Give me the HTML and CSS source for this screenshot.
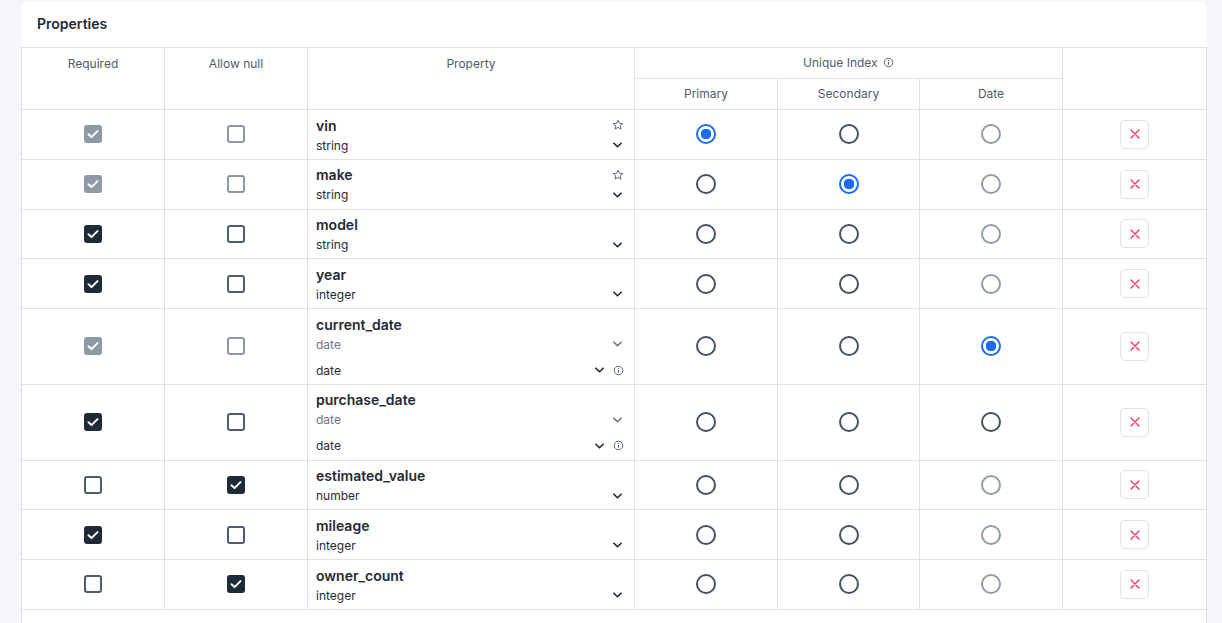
FILE: index.html
```html
<!DOCTYPE html>
<html>
<head>
<meta charset="utf-8">
<link rel="stylesheet" href="styles.css">
</head>
<body>
<svg width="0" height="0" class="defs">
  <defs>
    <symbol id="chev" viewBox="0 0 10 6"><path d="M1 1l4 4 4-4" fill="none" stroke="currentColor" stroke-width="1.8" stroke-linecap="round" stroke-linejoin="round"/></symbol>
    <symbol id="star" viewBox="0 0 12 12"><path d="M6 1.2l1.4 3.1 3.3.3-2.5 2.2.8 3.3L6 8.4 3 10.1l.8-3.3L1.3 4.6l3.3-.3z" fill="none" stroke="currentColor" stroke-width="0.9" stroke-linejoin="round"/></symbol>
    <symbol id="info" viewBox="0 0 12 12"><circle cx="6" cy="6" r="4.6" fill="none" stroke="currentColor" stroke-width="1"/><path d="M6 5.4v3" stroke="currentColor" stroke-width="1.1"/><circle cx="6" cy="3.8" r="0.6" fill="currentColor"/></symbol>
    <symbol id="check" viewBox="0 0 18 18"><path d="M4.5 9.3l3 2.8 6-6" fill="none" stroke="#fff" stroke-width="2" stroke-linecap="round" stroke-linejoin="round"/></symbol>
    <symbol id="cross" viewBox="0 0 10 10"><path d="M1 1l8 8M9 1l-8 8" stroke="currentColor" stroke-width="1.4" stroke-linecap="round"/></symbol>
  </defs>
</svg>
<div class="card">
  <h2 class="card-title">Properties</h2>
  <table class="props">
    <colgroup>
      <col class="c-req"><col class="c-null"><col class="c-prop"><col class="c-idx"><col class="c-idx2"><col class="c-idx"><col class="c-del">
    </colgroup>
    <thead>
      <tr class="h1">
        <th rowspan="2" class="tall">Required</th>
        <th rowspan="2" class="tall">Allow null</th>
        <th rowspan="2" class="tall">Property</th>
        <th colspan="3">Unique Index <svg class="i-info hdr-info"><use href="#info"/></svg></th>
        <th rowspan="2" class="tall"></th>
      </tr>
      <tr class="h2">
        <th>Primary</th>
        <th>Secondary</th>
        <th>Date</th>
      </tr>
    </thead>
    <tbody>
      <tr>
        <td class="ctr"><span class="cb checked disabled"><svg><use href="#check"/></svg></span></td>
        <td class="ctr"><span class="cb disabled"></span></td>
        <td class="prop">
          <div class="line"><span class="name">vin</span><svg class="i-star"><use href="#star"/></svg></div>
          <div class="line"><span class="type">string</span><svg class="i-chev"><use href="#chev"/></svg></div>
        </td>
        <td class="ctr"><span class="radio on"></span></td>
        <td class="ctr"><span class="radio"></span></td>
        <td class="ctr"><span class="radio disabled"></span></td>
        <td class="ctr"><button class="del"><svg><use href="#cross"/></svg></button></td>
      </tr>
      <tr>
        <td class="ctr"><span class="cb checked disabled"><svg><use href="#check"/></svg></span></td>
        <td class="ctr"><span class="cb disabled"></span></td>
        <td class="prop">
          <div class="line"><span class="name">make</span><svg class="i-star"><use href="#star"/></svg></div>
          <div class="line"><span class="type">string</span><svg class="i-chev"><use href="#chev"/></svg></div>
        </td>
        <td class="ctr"><span class="radio"></span></td>
        <td class="ctr"><span class="radio on"></span></td>
        <td class="ctr"><span class="radio disabled"></span></td>
        <td class="ctr"><button class="del"><svg><use href="#cross"/></svg></button></td>
      </tr>
      <tr>
        <td class="ctr"><span class="cb checked"><svg><use href="#check"/></svg></span></td>
        <td class="ctr"><span class="cb"></span></td>
        <td class="prop">
          <div class="line"><span class="name">model</span></div>
          <div class="line"><span class="type">string</span><svg class="i-chev"><use href="#chev"/></svg></div>
        </td>
        <td class="ctr"><span class="radio"></span></td>
        <td class="ctr"><span class="radio"></span></td>
        <td class="ctr"><span class="radio disabled"></span></td>
        <td class="ctr"><button class="del"><svg><use href="#cross"/></svg></button></td>
      </tr>
      <tr>
        <td class="ctr"><span class="cb checked"><svg><use href="#check"/></svg></span></td>
        <td class="ctr"><span class="cb"></span></td>
        <td class="prop">
          <div class="line"><span class="name">year</span></div>
          <div class="line"><span class="type">integer</span><svg class="i-chev"><use href="#chev"/></svg></div>
        </td>
        <td class="ctr"><span class="radio"></span></td>
        <td class="ctr"><span class="radio"></span></td>
        <td class="ctr"><span class="radio disabled"></span></td>
        <td class="ctr"><button class="del"><svg><use href="#cross"/></svg></button></td>
      </tr>
      <tr>
        <td class="ctr"><span class="cb checked disabled"><svg><use href="#check"/></svg></span></td>
        <td class="ctr"><span class="cb disabled"></span></td>
        <td class="prop">
          <div class="line"><span class="name">current_date</span></div>
          <div class="line muted"><span class="type">date</span><svg class="i-chev"><use href="#chev"/></svg></div>
          <div class="line sub"><span class="type">date</span><span class="icons"><svg class="i-chev"><use href="#chev"/></svg><svg class="i-info"><use href="#info"/></svg></span></div>
        </td>
        <td class="ctr"><span class="radio"></span></td>
        <td class="ctr"><span class="radio"></span></td>
        <td class="ctr"><span class="radio on"></span></td>
        <td class="ctr"><button class="del"><svg><use href="#cross"/></svg></button></td>
      </tr>
      <tr>
        <td class="ctr"><span class="cb checked"><svg><use href="#check"/></svg></span></td>
        <td class="ctr"><span class="cb"></span></td>
        <td class="prop">
          <div class="line"><span class="name">purchase_date</span></div>
          <div class="line muted"><span class="type">date</span><svg class="i-chev"><use href="#chev"/></svg></div>
          <div class="line sub"><span class="type">date</span><span class="icons"><svg class="i-chev"><use href="#chev"/></svg><svg class="i-info"><use href="#info"/></svg></span></div>
        </td>
        <td class="ctr"><span class="radio"></span></td>
        <td class="ctr"><span class="radio"></span></td>
        <td class="ctr"><span class="radio"></span></td>
        <td class="ctr"><button class="del"><svg><use href="#cross"/></svg></button></td>
      </tr>
      <tr>
        <td class="ctr"><span class="cb"></span></td>
        <td class="ctr"><span class="cb checked"><svg><use href="#check"/></svg></span></td>
        <td class="prop">
          <div class="line"><span class="name">estimated_value</span></div>
          <div class="line"><span class="type">number</span><svg class="i-chev"><use href="#chev"/></svg></div>
        </td>
        <td class="ctr"><span class="radio"></span></td>
        <td class="ctr"><span class="radio"></span></td>
        <td class="ctr"><span class="radio disabled"></span></td>
        <td class="ctr"><button class="del"><svg><use href="#cross"/></svg></button></td>
      </tr>
      <tr>
        <td class="ctr"><span class="cb checked"><svg><use href="#check"/></svg></span></td>
        <td class="ctr"><span class="cb"></span></td>
        <td class="prop">
          <div class="line"><span class="name">mileage</span></div>
          <div class="line"><span class="type">integer</span><svg class="i-chev"><use href="#chev"/></svg></div>
        </td>
        <td class="ctr"><span class="radio"></span></td>
        <td class="ctr"><span class="radio"></span></td>
        <td class="ctr"><span class="radio disabled"></span></td>
        <td class="ctr"><button class="del"><svg><use href="#cross"/></svg></button></td>
      </tr>
      <tr>
        <td class="ctr"><span class="cb"></span></td>
        <td class="ctr"><span class="cb checked"><svg><use href="#check"/></svg></span></td>
        <td class="prop">
          <div class="line"><span class="name">owner_count</span></div>
          <div class="line"><span class="type">integer</span><svg class="i-chev"><use href="#chev"/></svg></div>
        </td>
        <td class="ctr"><span class="radio"></span></td>
        <td class="ctr"><span class="radio"></span></td>
        <td class="ctr"><span class="radio disabled"></span></td>
        <td class="ctr"><button class="del"><svg><use href="#cross"/></svg></button></td>
      </tr>
      <tr class="foot">
        <td colspan="7"></td>
      </tr>
    </tbody>
  </table>
</div>
</body>
</html>
```

FILE: styles.css
```css
* { box-sizing: border-box; }
html, body { margin: 0; padding: 0; }
body {
  background: #f5f6fa;
  font-family: Inter, Roboto, "Liberation Sans", sans-serif;
  color: #1e2a36;
  padding: 1px 15px 0 21px;
}
.defs { position: absolute; width: 0; height: 0; }
.card {
  background: #fff;
  border-radius: 8px 8px 0 0;
  min-height: 700px;
}
.card-title {
  margin: 0;
  padding: 13px 16px 13px;
  font-size: 14px;
  line-height: 20px;
  font-weight: 600;
  color: #1e2a36;
}
.props {
  width: 100%;
  border-collapse: collapse;
  table-layout: fixed;
}
.c-req, .c-null { width: 143px; }
.c-prop { width: 327px; }
.c-idx { width: 143px; }
.c-idx2 { width: 142px; }
.c-del { width: 144px; }
.props th, .props td {
  border: 1px solid #dfdfe6;
  padding: 0;
}
.props th {
  font-size: 12px;
  font-weight: 400;
  color: #4f5b67;
  vertical-align: top;
  line-height: 16px;
}
.h1 th { height: 31px; padding-top: 7px; }
.h1 th.tall { padding-top: 8px; }
.h2 th { height: 31px; padding-top: 7px; }
.hdr-info { width: 11px; height: 11px; vertical-align: -1px; margin-left: 2px; color: #4f5b67; }
.props td { vertical-align: middle; }
.ctr { text-align: center; line-height: 0; }
tbody tr { height: 49.75px; }
.prop { padding: 5px 10px 3.75px 8px !important; }
.line {
  display: flex;
  align-items: center;
  justify-content: space-between;
  height: 20px;
}
.line.sub { margin-top: 6px; }
.name { font-size: 14px; font-weight: 600; color: #1e2a36; }
.type { font-size: 12px; color: #1e2a36; }
.muted .type { color: #6b7480; }
.muted .i-chev { color: #6b7480; }
.i-chev { width: 9px; height: 6px; color: #1e2a36; margin-right: 2px; }
.i-star { width: 12px; height: 12px; color: #4f5b67; margin-right: 0; }
.icons { display: flex; align-items: center; gap: 9px; }
.icons .i-chev { margin-right: 0; }
.i-info { width: 11px; height: 11px; color: #4f5b67; }
.cb {
  display: inline-flex;
  width: 18px;
  height: 18px;
  border: 2px solid #4b5d6e;
  border-radius: 3px;
  vertical-align: middle;
  align-items: center;
  justify-content: center;
}
.cb svg { width: 18px; height: 18px; flex: none; }
.cb.checked { background: #1e2a36; border-color: #1e2a36; }
.cb.disabled { border-color: #8d99a5; }
.cb.checked.disabled { background: #8d99a5; border-color: #8d99a5; }
.radio {
  display: inline-block;
  width: 20px;
  height: 20px;
  border: 2px solid #44525f;
  border-radius: 50%;
  vertical-align: middle;
}
.radio.disabled { border-color: #929ca6; }
.radio.on {
  border-color: #1a6cf0;
  background: radial-gradient(circle, #1a6cf0 0 5px, #fff 5.5px);
}
.del {
  width: 29px;
  height: 29px;
  border: 1px solid #e0e0e8;
  border-radius: 5px;
  background: #fff;
  padding: 0;
  display: inline-flex;
  align-items: center;
  justify-content: center;
  vertical-align: middle;
  color: #f2365e;
}
.del svg { width: 10px; height: 10px; }
.foot { height: 100px; }
```
